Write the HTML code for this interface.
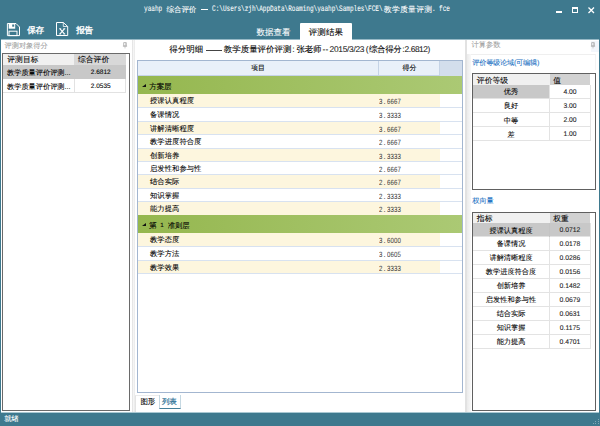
<!DOCTYPE html>
<html><head><meta charset="utf-8">
<style>
*{margin:0;padding:0;box-sizing:border-box}
html,body{width:600px;height:426px;overflow:hidden;background:#3e798e;font-family:"Liberation Sans",sans-serif;color:#000}
.a{position:absolute}
.t{position:absolute;white-space:nowrap;line-height:1;-webkit-text-stroke-width:0.08px;text-rendering:geometricPrecision}
.m{font-family:"Liberation Mono",monospace}
</style></head><body>
<div class="t" style="left:144.2px;top:4.9px;font-family:'Liberation Mono',monospace;font-size:8.4px;color:#fff;transform:scaleX(0.722);transform-origin:0 0">yaahp</div>
<div class="t" style="left:166.6px;top:5.9px;font-size:7.6px;color:#fff;letter-spacing:-0.2px">综合评价</div>
<div class="a" style="left:201.2px;top:8.6px;width:7.2px;height:1px;background:#fff"></div>
<div class="t" style="left:211.7px;top:4.9px;font-family:'Liberation Mono',monospace;font-size:8.4px;color:#fff;transform:scaleX(0.722);transform-origin:0 0">C:\Users\zjh\AppData\Roaming\yaahp\Samples\FCE\</div>
<div class="t" style="left:383.8px;top:5.9px;font-size:7.8px;color:#fff;letter-spacing:0.3px">教学质量评测</div>
<div class="t" style="left:432.4px;top:4.9px;font-family:'Liberation Mono',monospace;font-size:8.4px;color:#fff;transform:scaleX(0.722);transform-origin:0 0">.</div>
<div class="t" style="left:438.6px;top:4.9px;font-family:'Liberation Mono',monospace;font-size:8.4px;color:#fff;transform:scaleX(0.722);transform-origin:0 0">fce</div>
<div class="a" style="left:556.2px;top:11.4px;width:6px;height:1.4px;background:#fff"></div>
<div class="a" style="left:572px;top:6.8px;width:6.2px;height:6px;border:1px solid #fff;border-top-width:2px"></div>
<svg class="a" style="left:588px;top:7px" width="7" height="7" viewBox="0 0 7 7"><path d="M0.5 0.5L6 6M6 0.5L0.5 6" stroke="#fff" stroke-width="1.3"/></svg>
<svg class="a" style="left:6px;top:22px" width="15" height="15" viewBox="0 0 15 15">
<path d="M1.4 1.5H10L13.5 5V13.6H1.4Z" fill="none" stroke="#fff" stroke-width="1"/>
<rect x="2.7" y="1.5" width="6.5" height="5.2" fill="#fff"/>
<rect x="6.2" y="2.5" width="2" height="2.2" fill="#3e798e"/>
<rect x="3" y="9.2" width="8" height="4.4" fill="none" stroke="#fff" stroke-width="1"/>
</svg>
<div class="t" style="left:27.3px;top:26.2px;font-size:8.6px;color:#fff;-webkit-text-stroke-width:0.35px;letter-spacing:-0.3px">保存</div>
<svg class="a" style="left:55px;top:21px" width="15" height="16" viewBox="0 0 15 16">
<path d="M1.5 1.5H8.3L12.7 5.5V14.5H1.5Z" fill="none" stroke="#fff" stroke-width="1"/>
<path d="M8.3 1.5V5.5H12.7" fill="none" stroke="#fff" stroke-width="0.8"/>
<path d="M4.8 7.6L9.6 13.1M9.6 7.6L4.8 13.1" stroke="#fff" stroke-width="1.15"/><path d="M4 7.6H6.2M8.3 7.6H10.4M4 13.1H6.2M8.3 13.1H10.4" stroke="#fff" stroke-width="0.6"/>
</svg>
<div class="t" style="left:76.3px;top:26.2px;font-size:8.6px;color:#fff;-webkit-text-stroke-width:0.35px;letter-spacing:-0.3px">报告</div>
<div class="t" style="left:256.4px;top:27.9px;font-size:8.5px;color:#fff;letter-spacing:0.05px">数据查看</div>
<div class="a" style="left:300.2px;top:22.6px;width:51.8px;height:18px;background:#fff;border-radius:1px 1px 0 0"></div>
<div class="t" style="left:308.8px;top:27.9px;font-size:8.5px;color:#000;letter-spacing:0.05px">评测结果</div>
<div class="a" style="left:1px;top:40px;width:131.5px;height:372.4px;background:#fff"></div>
<div class="t" style="left:4.5px;top:41.5px;font-size:7.2px;color:#a0a0a0;">评测对象得分</div>
<svg class="a" style="left:122.4px;top:42px" width="6" height="7" viewBox="0 0 6 7"><path d="M1.7 0.6H4.3V3.9H1.7Z" fill="none" stroke="#a8a8a8" stroke-width="0.8"/><path d="M3.5 0.9V3.7" stroke="#bbb" stroke-width="0.6"/><path d="M0.9 4.2H5.1" stroke="#a8a8a8" stroke-width="0.8"/><path d="M3 4.3V6.4" stroke="#b5b5b5" stroke-width="0.7"/></svg>
<div class="a" style="left:2px;top:53px;width:128px;height:358px;border:1px solid #6a6a6a;background:#fff"></div>
<div class="a" style="left:3px;top:54px;width:71.4px;height:10.7px;background:#f0f0f0"></div>
<div class="a" style="left:74.4px;top:54px;width:52px;height:10.7px;background:#d8d8d8"></div>
<div class="t" style="left:7.3px;top:56px;font-size:7.8px;color:#000;">评测目标</div>
<div class="t" style="left:78px;top:56px;font-size:7.8px;color:#000;">综合评价</div>
<div class="a" style="left:3px;top:64.7px;width:123.4px;height:14.3px;background:#c8c8c8"></div>
<div class="t" style="left:7px;top:69px;font-size:7.2px;color:#000;">教学质量评价评测...</div>
<div class="t" style="left:90.8px;top:70.3px;font-size:6.5px;color:#000;">2.6812</div>
<div class="a" style="left:3px;top:79px;width:123.4px;height:13.5px;border-bottom:1px solid #e2e2e2;border-right:1px solid #e2e2e2"></div>
<div class="a" style="left:74px;top:79px;width:1px;height:13.5px;background:#e2e2e2"></div>
<div class="t" style="left:7px;top:83px;font-size:7.2px;color:#000;">教学质量评价评测...</div>
<div class="t" style="left:90.8px;top:84.3px;font-size:6.5px;color:#000;">2.0535</div>
<div class="a" style="left:131.6px;top:40px;width:3.4px;height:372.4px;background:linear-gradient(90deg,#dedede,#f7f7f7 55%,#e6e6e6)"></div>
<div class="a" style="left:465px;top:40px;width:1.6px;height:372.4px;background:#e2e2e2"></div>
<div class="a" style="left:135px;top:40px;width:330px;height:372.4px;background:#fff"></div>
<div class="t" style="left:169.2px;top:45.1px;font-size:8.5px;color:#000;">得分明细</div>
<div class="a" style="left:205.8px;top:49.6px;width:15.8px;height:0.9px;background:#444"></div>
<div class="t" style="left:223.8px;top:45.1px;font-size:8.5px;color:#000;letter-spacing:-0.05px">教学质量评价评测</div>
<div class="t" style="left:292.2px;top:45.0px;font-size:8.4px;color:#1a1a1a;">:</div>
<div class="t" style="left:296.5px;top:45.1px;font-size:8.5px;color:#000;letter-spacing:-0.3px">张老师</div>
<div class="t" style="left:322.4px;top:45.0px;font-size:8.4px;color:#1a1a1a;letter-spacing:0.2px">--</div>
<div class="t" style="left:329.6px;top:45.0px;font-size:8.4px;color:#1a1a1a;letter-spacing:-0.3px">2015/3/23</div>
<div class="t" style="left:365.8px;top:45.0px;font-size:8.4px;color:#1a1a1a;">(</div>
<div class="t" style="left:369.0px;top:45.1px;font-size:8.5px;color:#000;letter-spacing:-0.4px">综合得分</div>
<div class="t" style="left:402.2px;top:45.0px;font-size:8.4px;color:#1a1a1a;">:</div>
<div class="t" style="left:404.6px;top:45.0px;font-size:8.4px;color:#1a1a1a;letter-spacing:-0.45px">2.6812</div>
<div class="t" style="left:427.4px;top:45.0px;font-size:8.4px;color:#1a1a1a;">)</div>
<div class="a" style="left:137px;top:60.2px;width:325.8px;height:332.40000000000003px;border:1px solid #a3b6d0;background:#fff"></div>
<div class="a" style="left:138px;top:61.2px;width:240.3px;height:14.399999999999991px;background:#e9f0f9;border-bottom:1px solid #c6d4e7"></div>
<div class="a" style="left:378.3px;top:61.2px;width:61.0px;height:14.399999999999991px;background:#e9f0f9;border-left:1px solid #c5d3e6;border-bottom:1px solid #c6d4e7"></div>
<div class="a" style="left:439.3px;top:61.2px;width:22.5px;height:14.399999999999991px;background:#d3deec;border-left:1px solid #c5d3e6"></div>
<div class="t" style="left:251px;top:64.5px;font-size:7px;color:#000;">项目</div>
<div class="t" style="left:402.6px;top:64.5px;font-size:7px;color:#000;">得分</div>
<div class="a" style="left:138px;top:75.6px;width:323.8px;height:18.4px;background:linear-gradient(90deg,#95b74f,#abc974)"></div>
<svg class="a" style="left:141.5px;top:83.6px" width="4" height="3" viewBox="0 0 4 3"><path d="M4 0V3H0Z" fill="#111"/></svg>
<div class="t" style="left:149.3px;top:82.69999999999999px;font-size:7.6px;color:#000;letter-spacing:-0.2px">方案层</div>
<div class="a" style="left:138px;top:94px;width:302px;height:14px;background:#fdf6de"></div>
<div class="a" style="left:138px;top:107px;width:323.8px;height:1px;background:#d8e2f0"></div>
<div class="t" style="left:150px;top:97.3px;font-size:7.3px;color:#000;letter-spacing:0.05px">授课认真程度</div>
<div class="t" style="left:379.4px;top:98.0px;font-size:7.6px;transform:scaleX(0.8);transform-origin:0 0;color:#333;-webkit-text-stroke-width:0">3</div>
<div class="t" style="left:383.4px;top:98.0px;font-size:7.6px;color:#333;-webkit-text-stroke-width:0">.</div>
<div class="t" style="left:386.6px;top:98.0px;font-size:7.6px;letter-spacing:0.14px;transform:scaleX(0.8);transform-origin:0 0;color:#333;-webkit-text-stroke-width:0">6667</div>
<div class="a" style="left:138px;top:121px;width:323.8px;height:1px;background:#d8e2f0"></div>
<div class="t" style="left:150px;top:111.3px;font-size:7.3px;color:#000;letter-spacing:0.05px">备课情况</div>
<div class="t" style="left:379.4px;top:112.0px;font-size:7.6px;transform:scaleX(0.8);transform-origin:0 0;color:#333;-webkit-text-stroke-width:0">3</div>
<div class="t" style="left:383.4px;top:112.0px;font-size:7.6px;color:#333;-webkit-text-stroke-width:0">.</div>
<div class="t" style="left:386.6px;top:112.0px;font-size:7.6px;letter-spacing:0.14px;transform:scaleX(0.8);transform-origin:0 0;color:#333;-webkit-text-stroke-width:0">3333</div>
<div class="a" style="left:138px;top:122px;width:302px;height:13px;background:#fdf6de"></div>
<div class="a" style="left:138px;top:134px;width:323.8px;height:1px;background:#d8e2f0"></div>
<div class="t" style="left:150px;top:125.3px;font-size:7.3px;color:#000;letter-spacing:0.05px">讲解清晰程度</div>
<div class="t" style="left:379.4px;top:126.0px;font-size:7.6px;transform:scaleX(0.8);transform-origin:0 0;color:#333;-webkit-text-stroke-width:0">3</div>
<div class="t" style="left:383.4px;top:126.0px;font-size:7.6px;color:#333;-webkit-text-stroke-width:0">.</div>
<div class="t" style="left:386.6px;top:126.0px;font-size:7.6px;letter-spacing:0.14px;transform:scaleX(0.8);transform-origin:0 0;color:#333;-webkit-text-stroke-width:0">6667</div>
<div class="a" style="left:138px;top:148px;width:323.8px;height:1px;background:#d8e2f0"></div>
<div class="t" style="left:150px;top:138.3px;font-size:7.3px;color:#000;letter-spacing:0.05px">教学进度符合度</div>
<div class="t" style="left:379.4px;top:139.0px;font-size:7.6px;transform:scaleX(0.8);transform-origin:0 0;color:#333;-webkit-text-stroke-width:0">2</div>
<div class="t" style="left:383.4px;top:139.0px;font-size:7.6px;color:#333;-webkit-text-stroke-width:0">.</div>
<div class="t" style="left:386.6px;top:139.0px;font-size:7.6px;letter-spacing:0.14px;transform:scaleX(0.8);transform-origin:0 0;color:#333;-webkit-text-stroke-width:0">6667</div>
<div class="a" style="left:138px;top:149px;width:302px;height:13px;background:#fdf6de"></div>
<div class="a" style="left:138px;top:161px;width:323.8px;height:1px;background:#d8e2f0"></div>
<div class="t" style="left:150px;top:152.3px;font-size:7.3px;color:#000;letter-spacing:0.05px">创新培养</div>
<div class="t" style="left:379.4px;top:153.0px;font-size:7.6px;transform:scaleX(0.8);transform-origin:0 0;color:#333;-webkit-text-stroke-width:0">3</div>
<div class="t" style="left:383.4px;top:153.0px;font-size:7.6px;color:#333;-webkit-text-stroke-width:0">.</div>
<div class="t" style="left:386.6px;top:153.0px;font-size:7.6px;letter-spacing:0.14px;transform:scaleX(0.8);transform-origin:0 0;color:#333;-webkit-text-stroke-width:0">3333</div>
<div class="a" style="left:138px;top:174px;width:323.8px;height:1px;background:#d8e2f0"></div>
<div class="t" style="left:150px;top:165.3px;font-size:7.3px;color:#000;letter-spacing:0.05px">启发性和参与性</div>
<div class="t" style="left:379.4px;top:166.0px;font-size:7.6px;transform:scaleX(0.8);transform-origin:0 0;color:#333;-webkit-text-stroke-width:0">2</div>
<div class="t" style="left:383.4px;top:166.0px;font-size:7.6px;color:#333;-webkit-text-stroke-width:0">.</div>
<div class="t" style="left:386.6px;top:166.0px;font-size:7.6px;letter-spacing:0.14px;transform:scaleX(0.8);transform-origin:0 0;color:#333;-webkit-text-stroke-width:0">6667</div>
<div class="a" style="left:138px;top:175px;width:302px;height:14px;background:#fdf6de"></div>
<div class="a" style="left:138px;top:188px;width:323.8px;height:1px;background:#d8e2f0"></div>
<div class="t" style="left:150px;top:178.3px;font-size:7.3px;color:#000;letter-spacing:0.05px">结合实际</div>
<div class="t" style="left:379.4px;top:179.0px;font-size:7.6px;transform:scaleX(0.8);transform-origin:0 0;color:#333;-webkit-text-stroke-width:0">2</div>
<div class="t" style="left:383.4px;top:179.0px;font-size:7.6px;color:#333;-webkit-text-stroke-width:0">.</div>
<div class="t" style="left:386.6px;top:179.0px;font-size:7.6px;letter-spacing:0.14px;transform:scaleX(0.8);transform-origin:0 0;color:#333;-webkit-text-stroke-width:0">6667</div>
<div class="a" style="left:138px;top:201px;width:323.8px;height:1px;background:#d8e2f0"></div>
<div class="t" style="left:150px;top:192.3px;font-size:7.3px;color:#000;letter-spacing:0.05px">知识掌握</div>
<div class="t" style="left:379.4px;top:193.0px;font-size:7.6px;transform:scaleX(0.8);transform-origin:0 0;color:#333;-webkit-text-stroke-width:0">2</div>
<div class="t" style="left:383.4px;top:193.0px;font-size:7.6px;color:#333;-webkit-text-stroke-width:0">.</div>
<div class="t" style="left:386.6px;top:193.0px;font-size:7.6px;letter-spacing:0.14px;transform:scaleX(0.8);transform-origin:0 0;color:#333;-webkit-text-stroke-width:0">3333</div>
<div class="a" style="left:138px;top:202px;width:302px;height:13px;background:#fdf6de"></div>
<div class="t" style="left:150px;top:205.3px;font-size:7.3px;color:#000;letter-spacing:0.05px">能力提高</div>
<div class="t" style="left:379.4px;top:206.0px;font-size:7.6px;transform:scaleX(0.8);transform-origin:0 0;color:#333;-webkit-text-stroke-width:0">2</div>
<div class="t" style="left:383.4px;top:206.0px;font-size:7.6px;color:#333;-webkit-text-stroke-width:0">.</div>
<div class="t" style="left:386.6px;top:206.0px;font-size:7.6px;letter-spacing:0.14px;transform:scaleX(0.8);transform-origin:0 0;color:#333;-webkit-text-stroke-width:0">3333</div>
<div class="a" style="left:138px;top:215px;width:323.8px;height:18px;background:linear-gradient(90deg,#95b74f,#abc974)"></div>
<svg class="a" style="left:141.5px;top:223px" width="4" height="3" viewBox="0 0 4 3"><path d="M4 0V3H0Z" fill="#111"/></svg>
<div class="t" style="left:149px;top:222.3px;font-size:7.6px;color:#000;">第</div>
<div class="t" style="left:160.2px;top:223.0px;font-size:6.3px;color:#000;">1</div>
<div class="t" style="left:167.8px;top:222.3px;font-size:7.4px;color:#000;letter-spacing:-0.2px">准则层</div>
<div class="a" style="left:138px;top:233px;width:302px;height:14px;background:#fdf6de"></div>
<div class="a" style="left:138px;top:246px;width:323.8px;height:1px;background:#d8e2f0"></div>
<div class="t" style="left:150px;top:236.3px;font-size:7.3px;color:#000;letter-spacing:0.05px">教学态度</div>
<div class="t" style="left:379.4px;top:237.0px;font-size:7.6px;transform:scaleX(0.8);transform-origin:0 0;color:#333;-webkit-text-stroke-width:0">3</div>
<div class="t" style="left:383.4px;top:237.0px;font-size:7.6px;color:#333;-webkit-text-stroke-width:0">.</div>
<div class="t" style="left:386.6px;top:237.0px;font-size:7.6px;letter-spacing:0.14px;transform:scaleX(0.8);transform-origin:0 0;color:#333;-webkit-text-stroke-width:0">6000</div>
<div class="a" style="left:138px;top:260px;width:323.8px;height:1px;background:#d8e2f0"></div>
<div class="t" style="left:150px;top:250.3px;font-size:7.3px;color:#000;letter-spacing:0.05px">教学方法</div>
<div class="t" style="left:379.4px;top:251.0px;font-size:7.6px;transform:scaleX(0.8);transform-origin:0 0;color:#333;-webkit-text-stroke-width:0">3</div>
<div class="t" style="left:383.4px;top:251.0px;font-size:7.6px;color:#333;-webkit-text-stroke-width:0">.</div>
<div class="t" style="left:386.6px;top:251.0px;font-size:7.6px;letter-spacing:0.14px;transform:scaleX(0.8);transform-origin:0 0;color:#333;-webkit-text-stroke-width:0">0605</div>
<div class="a" style="left:138px;top:261px;width:302px;height:13px;background:#fdf6de"></div>
<div class="a" style="left:138px;top:273px;width:323.8px;height:1px;background:#d8e2f0"></div>
<div class="t" style="left:150px;top:264.3px;font-size:7.3px;color:#000;letter-spacing:0.05px">教学效果</div>
<div class="t" style="left:379.4px;top:265.0px;font-size:7.6px;transform:scaleX(0.8);transform-origin:0 0;color:#333;-webkit-text-stroke-width:0">2</div>
<div class="t" style="left:383.4px;top:265.0px;font-size:7.6px;color:#333;-webkit-text-stroke-width:0">.</div>
<div class="t" style="left:386.6px;top:265.0px;font-size:7.6px;letter-spacing:0.14px;transform:scaleX(0.8);transform-origin:0 0;color:#333;-webkit-text-stroke-width:0">3333</div>
<div class="a" style="left:134.6px;top:395px;width:24.4px;height:17px;border-left:1px solid #e4e4e4;border-top:1px solid #ececec"></div>
<div class="t" style="left:140.5px;top:397.9px;font-size:7.5px;color:#000;letter-spacing:-0.3px">图形</div>
<div class="a" style="left:159px;top:395px;width:21.5px;height:14px;border:1px solid #c5d8e2;border-top:none;border-bottom:1.8px solid #437f9a;background:#fff"></div>
<div class="t" style="left:162px;top:397.9px;font-size:7.5px;color:#2c7196;letter-spacing:-0.3px;-webkit-text-stroke-width:0.2px">列表</div>
<div class="t" style="left:4.3px;top:415px;font-size:7.3px;color:#fff;">就绪</div>
<div class="a" style="left:466.6px;top:40px;width:132.4px;height:372.4px;background:#fff"></div>
<div class="t" style="left:471.6px;top:41px;font-size:7.2px;color:#a0a0a0;">计算参数</div>
<div class="a" style="left:590.5px;top:41px;width:8px;height:11px;background:#f3f6fb"></div>
<svg class="a" style="left:590px;top:42px" width="6" height="7" viewBox="0 0 6 7"><path d="M1.7 0.6H4.3V3.9H1.7Z" fill="none" stroke="#a8a8a8" stroke-width="0.8"/><path d="M3.5 0.9V3.7" stroke="#bbb" stroke-width="0.6"/><path d="M0.9 4.2H5.1" stroke="#a8a8a8" stroke-width="0.8"/><path d="M3 4.3V6.4" stroke="#b5b5b5" stroke-width="0.7"/></svg>
<div class="a" style="left:466.6px;top:53.6px;width:4.4px;height:358.8px;background:linear-gradient(90deg,#ebebeb,#f8f8f8)"></div>
<div class="a" style="left:470.5px;top:53.8px;width:125.5px;height:16px;border-top:1px solid #efefef;border-right:1px solid #f3f3f3"></div>
<div class="t" style="left:472.3px;top:58.6px;font-size:7.2px;color:#1d72c4;letter-spacing:-0.25px">评价等级论域(可编辑)</div>
<div class="a" style="left:472px;top:73.3px;width:123.60000000000002px;height:116.3px;border:1px solid #606060;background:#fff"></div>
<div class="a" style="left:473px;top:74.3px;width:76.5px;height:10.600000000000009px;background:#f0f0f0"></div>
<div class="a" style="left:549.5px;top:74.3px;width:40.5px;height:10.600000000000009px;background:#d2d2d2"></div>
<div class="t" style="left:476.8px;top:76.5px;font-size:7.85px;color:#000;">评价等级</div>
<div class="t" style="left:553.3px;top:76.5px;font-size:7.6px;color:#000;">值</div>
<div class="a" style="left:473px;top:84.9px;width:76.5px;height:14.05px;background:#c8c8c8"></div>
<div class="a" style="left:473px;top:97.95px;width:117px;height:1px;background:#e3e3e3"></div>
<div class="a" style="left:549px;top:84.9px;width:1px;height:14.05px;background:#e3e3e3"></div>
<div class="a" style="left:589.5px;top:84.9px;width:1px;height:14.05px;background:#e3e3e3"></div>
<div class="t" style="left:473px;width:76px;text-align:center;top:88.4px;font-size:7.2px">优秀</div>
<div class="t" style="left:550px;width:40px;text-align:center;top:90.2px;font-size:6.8px;color:#222">4.00</div>
<div class="a" style="left:473px;top:112.0px;width:117px;height:1px;background:#e3e3e3"></div>
<div class="a" style="left:549px;top:98.95px;width:1px;height:14.05px;background:#e3e3e3"></div>
<div class="a" style="left:589.5px;top:98.95px;width:1px;height:14.05px;background:#e3e3e3"></div>
<div class="t" style="left:473px;width:76px;text-align:center;top:102.45px;font-size:7.2px">良好</div>
<div class="t" style="left:550px;width:40px;text-align:center;top:104.25px;font-size:6.8px;color:#222">3.00</div>
<div class="a" style="left:473px;top:126.05px;width:117px;height:1px;background:#e3e3e3"></div>
<div class="a" style="left:549px;top:113.0px;width:1px;height:14.05px;background:#e3e3e3"></div>
<div class="a" style="left:589.5px;top:113.0px;width:1px;height:14.05px;background:#e3e3e3"></div>
<div class="t" style="left:473px;width:76px;text-align:center;top:116.5px;font-size:7.2px">中等</div>
<div class="t" style="left:550px;width:40px;text-align:center;top:118.3px;font-size:6.8px;color:#222">2.00</div>
<div class="a" style="left:473px;top:140.1px;width:117px;height:1px;background:#e3e3e3"></div>
<div class="a" style="left:549px;top:127.05px;width:1px;height:14.05px;background:#e3e3e3"></div>
<div class="a" style="left:589.5px;top:127.05px;width:1px;height:14.05px;background:#e3e3e3"></div>
<div class="t" style="left:473px;width:76px;text-align:center;top:130.55px;font-size:7.2px">差</div>
<div class="t" style="left:550px;width:40px;text-align:center;top:132.35px;font-size:6.8px;color:#222">1.00</div>
<div class="t" style="left:472.2px;top:197.4px;font-size:7.2px;color:#1d72c4;">权向量</div>
<div class="a" style="left:472px;top:211.9px;width:123.60000000000002px;height:199.1px;border:1px solid #606060;background:#fff"></div>
<div class="a" style="left:473px;top:212.9px;width:76.5px;height:10.099999999999994px;background:#f0f0f0"></div>
<div class="a" style="left:549.5px;top:212.9px;width:40.5px;height:10.099999999999994px;background:#d2d2d2"></div>
<div class="t" style="left:476.8px;top:215.1px;font-size:7.85px;color:#000;">指标</div>
<div class="t" style="left:553.3px;top:215.1px;font-size:7.6px;color:#000;">权重</div>
<div class="a" style="left:473px;top:223px;width:76.5px;height:13.95px;background:#c8c8c8"></div>
<div class="a" style="left:549.5px;top:223px;width:40.5px;height:13.95px;background:#c8c8c8"></div>
<div class="a" style="left:473px;top:235.95px;width:117px;height:1px;background:#e3e3e3"></div>
<div class="a" style="left:549px;top:223px;width:1px;height:13.95px;background:#c4c4c4"></div>
<div class="a" style="left:589.5px;top:223px;width:1px;height:13.95px;background:#e3e3e3"></div>
<div class="t" style="left:473px;width:76px;text-align:center;top:226.5px;font-size:7.2px">授课认真程度</div>
<div class="t" style="left:550px;width:40px;text-align:center;top:228.3px;font-size:6.8px;color:#222">0.0712</div>
<div class="a" style="left:473px;top:249.89999999999998px;width:117px;height:1px;background:#e3e3e3"></div>
<div class="a" style="left:549px;top:236.95px;width:1px;height:13.95px;background:#e3e3e3"></div>
<div class="a" style="left:589.5px;top:236.95px;width:1px;height:13.95px;background:#e3e3e3"></div>
<div class="t" style="left:473px;width:76px;text-align:center;top:240.45px;font-size:7.2px">备课情况</div>
<div class="t" style="left:550px;width:40px;text-align:center;top:242.25px;font-size:6.8px;color:#222">0.0178</div>
<div class="a" style="left:473px;top:263.84999999999997px;width:117px;height:1px;background:#e3e3e3"></div>
<div class="a" style="left:549px;top:250.89999999999998px;width:1px;height:13.95px;background:#e3e3e3"></div>
<div class="a" style="left:589.5px;top:250.89999999999998px;width:1px;height:13.95px;background:#e3e3e3"></div>
<div class="t" style="left:473px;width:76px;text-align:center;top:254.39999999999998px;font-size:7.2px">讲解清晰程度</div>
<div class="t" style="left:550px;width:40px;text-align:center;top:256.2px;font-size:6.8px;color:#222">0.0286</div>
<div class="a" style="left:473px;top:277.79999999999995px;width:117px;height:1px;background:#e3e3e3"></div>
<div class="a" style="left:549px;top:264.84999999999997px;width:1px;height:13.95px;background:#e3e3e3"></div>
<div class="a" style="left:589.5px;top:264.84999999999997px;width:1px;height:13.95px;background:#e3e3e3"></div>
<div class="t" style="left:473px;width:76px;text-align:center;top:268.34999999999997px;font-size:7.2px">教学进度符合度</div>
<div class="t" style="left:550px;width:40px;text-align:center;top:270.15px;font-size:6.8px;color:#222">0.0156</div>
<div class="a" style="left:473px;top:291.74999999999994px;width:117px;height:1px;background:#e3e3e3"></div>
<div class="a" style="left:549px;top:278.79999999999995px;width:1px;height:13.95px;background:#e3e3e3"></div>
<div class="a" style="left:589.5px;top:278.79999999999995px;width:1px;height:13.95px;background:#e3e3e3"></div>
<div class="t" style="left:473px;width:76px;text-align:center;top:282.29999999999995px;font-size:7.2px">创新培养</div>
<div class="t" style="left:550px;width:40px;text-align:center;top:284.09999999999997px;font-size:6.8px;color:#222">0.1482</div>
<div class="a" style="left:473px;top:305.69999999999993px;width:117px;height:1px;background:#e3e3e3"></div>
<div class="a" style="left:549px;top:292.74999999999994px;width:1px;height:13.95px;background:#e3e3e3"></div>
<div class="a" style="left:589.5px;top:292.74999999999994px;width:1px;height:13.95px;background:#e3e3e3"></div>
<div class="t" style="left:473px;width:76px;text-align:center;top:296.24999999999994px;font-size:7.2px">启发性和参与性</div>
<div class="t" style="left:550px;width:40px;text-align:center;top:298.04999999999995px;font-size:6.8px;color:#222">0.0679</div>
<div class="a" style="left:473px;top:319.6499999999999px;width:117px;height:1px;background:#e3e3e3"></div>
<div class="a" style="left:549px;top:306.69999999999993px;width:1px;height:13.95px;background:#e3e3e3"></div>
<div class="a" style="left:589.5px;top:306.69999999999993px;width:1px;height:13.95px;background:#e3e3e3"></div>
<div class="t" style="left:473px;width:76px;text-align:center;top:310.19999999999993px;font-size:7.2px">结合实际</div>
<div class="t" style="left:550px;width:40px;text-align:center;top:311.99999999999994px;font-size:6.8px;color:#222">0.0631</div>
<div class="a" style="left:473px;top:333.5999999999999px;width:117px;height:1px;background:#e3e3e3"></div>
<div class="a" style="left:549px;top:320.6499999999999px;width:1px;height:13.95px;background:#e3e3e3"></div>
<div class="a" style="left:589.5px;top:320.6499999999999px;width:1px;height:13.95px;background:#e3e3e3"></div>
<div class="t" style="left:473px;width:76px;text-align:center;top:324.1499999999999px;font-size:7.2px">知识掌握</div>
<div class="t" style="left:550px;width:40px;text-align:center;top:325.94999999999993px;font-size:6.8px;color:#222">0.1175</div>
<div class="a" style="left:473px;top:347.5499999999999px;width:117px;height:1px;background:#e3e3e3"></div>
<div class="a" style="left:549px;top:334.5999999999999px;width:1px;height:13.95px;background:#e3e3e3"></div>
<div class="a" style="left:589.5px;top:334.5999999999999px;width:1px;height:13.95px;background:#e3e3e3"></div>
<div class="t" style="left:473px;width:76px;text-align:center;top:338.0999999999999px;font-size:7.2px">能力提高</div>
<div class="t" style="left:550px;width:40px;text-align:center;top:339.8999999999999px;font-size:6.8px;color:#222">0.4701</div>
<div class="a" style="left:1px;top:39px;width:299.2px;height:1px;background:#96b9c6"></div>
<div class="a" style="left:352px;top:39px;width:247px;height:1px;background:#96b9c6"></div>
<div class="a" style="left:1px;top:412px;width:598px;height:1px;background:#a9c8d2"></div>
<div class="a" style="left:597.8px;top:418.7px;width:1.2px;height:1.2px;background:rgba(255,255,255,0.35)"></div>
<div class="a" style="left:595.3px;top:421.1px;width:1.2px;height:1.2px;background:rgba(255,255,255,0.35)"></div>
<div class="a" style="left:597.8px;top:421.1px;width:1.2px;height:1.2px;background:rgba(255,255,255,0.35)"></div>
<div class="a" style="left:592.8px;top:423.3px;width:1.2px;height:1.2px;background:rgba(255,255,255,0.35)"></div>
<div class="a" style="left:595.3px;top:423.3px;width:1.2px;height:1.2px;background:rgba(255,255,255,0.35)"></div>
<div class="a" style="left:597.8px;top:423.3px;width:1.2px;height:1.2px;background:rgba(255,255,255,0.35)"></div>
</body></html>
